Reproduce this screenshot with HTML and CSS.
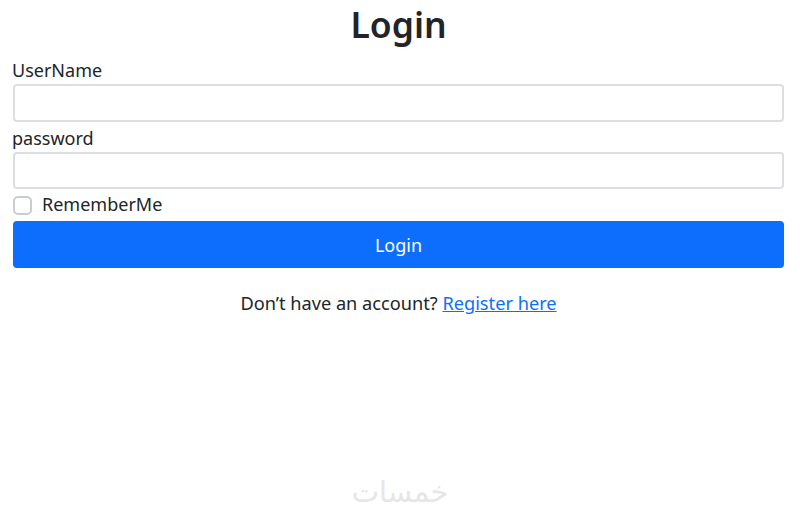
FILE: index.html
```html
<!DOCTYPE html>
<html lang="en">
<head>
<meta charset="utf-8">
<title>Login</title>
<link rel="stylesheet" href="styles.css">
</head>
<body>
<main class="page">
  <h1 class="title">Login</h1>
  <form class="form">
    <div class="field">
      <label class="label" for="user">UserName</label>
      <input class="input" id="user" type="text">
    </div>
    <div class="field">
      <label class="label" for="pass">password</label>
      <input class="input" id="pass" type="password">
    </div>
    <div class="check">
      <input class="check-box" id="remember" type="checkbox">
      <label class="check-label" for="remember">RememberMe</label>
    </div>
    <button class="button" type="button">Login</button>
  </form>
  <p class="note">Don’t have an account? <a class="link" href="#">Register here</a></p>
</main>
<div class="watermark" lang="ar" dir="rtl">خمسات</div>
</body>
</html>
```
FILE: styles.css
```css
* { box-sizing: border-box; }
html, body { height: 100%; }
body {
  margin: 0;
  background: #fff;
  color: #212529;
  font-family: "Noto Sans", "Open Sans", sans-serif;
  font-size: 18px;
  position: relative;
}
.page { padding: 0 16px 0 13px; }
.title {
  margin: 0;
  height: 48px;
  line-height: 48px;
  font-size: 35.5px;
  font-weight: 600;
  text-align: center;
}
.form { display: flex; flex-direction: column; }
.field { display: flex; flex-direction: column; }
.label {
  display: block;
  height: 36px;
  line-height: 20px;
  margin-left: -1px;
  padding-top: 12px;
}
.field + .field .label { height: 30px; padding-top: 6px; }
.input {
  display: block;
  width: 100%;
  height: 38px;
  border: 2px solid #dcdee2;
  border-radius: 4px;
  background: #fff;
}
.field + .field .input { height: 37px; }
.check {
  display: flex;
  align-items: center;
  height: 32px;
}
.check-box {
  appearance: none;
  width: 19px;
  height: 19px;
  margin: 0 10px 0 0;
  border: 2px solid #c9ccd1;
  border-radius: 5px;
  background: #fff;
}
.check-label { line-height: 20px; margin-top: -2px; }
.button {
  height: 47px;
  border: 0;
  border-radius: 4px;
  background: #0d6efd;
  color: #fff;
  font: inherit;
}
.note {
  margin: 24px 0 0;
  line-height: 22px;
  font-size: 18.2px;
  text-align: center;
}
.link { color: #0d6efd; }
.watermark {
  position: absolute;
  left: 0;
  right: 0;
  top: 472px;
  text-align: center;
  font-family: "DejaVu Sans", sans-serif;
  font-size: 29px;
  line-height: 40px;
  color: #e6e6e6;
}
```
